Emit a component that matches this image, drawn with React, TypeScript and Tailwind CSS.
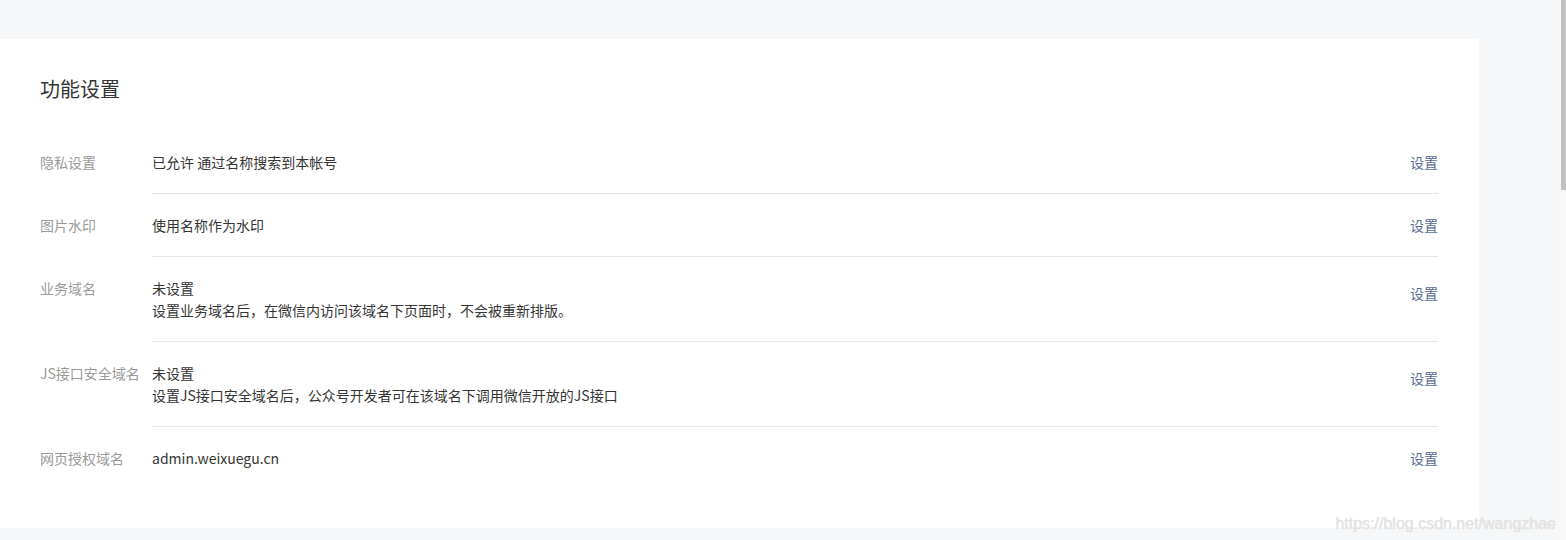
import React from 'react';

type Row = {
  label: string;
  lines: string[];
};

const rows: Row[] = [
  { label: '隐私设置', lines: ['已允许 通过名称搜索到本帐号'] },
  { label: '图片水印', lines: ['使用名称作为水印'] },
  { label: '业务域名', lines: ['未设置', '设置业务域名后，在微信内访问该域名下页面时，不会被重新排版。'] },
  { label: 'JS接口安全域名', lines: ['未设置', '设置JS接口安全域名后，公众号开发者可在该域名下调用微信开放的JS接口'] },
  { label: '网页授权域名', lines: ['admin.weixuegu.cn'] },
];

const font = { fontFamily: '"Microsoft YaHei", "Noto Sans CJK SC", "Noto Sans", sans-serif' };

export default function App() {
  return (
    <div className="relative flex h-[540px] w-[1566px] overflow-hidden bg-[#f6f7f9]" style={font}>
      <div className="flex-1 pt-[39px]">
        <div className="w-[1479px] rounded-tr-[2px] bg-white pl-[40px] pr-[41px] pt-[36px] pb-[39px]">
          <h2 className="text-[20px] leading-[28px] font-normal text-[#353535]">功能设置</h2>
          <div className="mt-[28px]">
            {rows.map((row, i) => {
              const last = i === rows.length - 1;
              const multi = row.lines.length > 1;
              return (
                <div key={row.label} className="flex text-[14px] leading-[22px]">
                  <div className="w-[112px] shrink-0 whitespace-nowrap pt-[20px] text-[#9a9a9a]">{row.label}</div>
                  <div className={`flex flex-1 justify-between pt-[20px] pb-[20px] ${last ? '' : 'border-b border-[#e7e7eb]'}`}>
                    <div className="text-[#353535]">
                      {row.lines.map((l) => (
                        <div key={l}>{l}</div>
                      ))}
                    </div>
                    <a className={`text-[#576b95] ${multi ? 'pt-[5px]' : ''}`}>设置</a>
                  </div>
                </div>
              );
            })}
          </div>
        </div>
      </div>
      <div className="w-[5px] shrink-0 bg-[#f8f8f8]">
        <div className="h-[190px] w-full bg-[#c1c1c1]" />
      </div>
      <div
        className="pointer-events-none absolute right-[10px] bottom-[6px] text-[16px] leading-[20px] text-[#e4e4e4]"
        style={{ fontFamily: '"Liberation Sans", Arial, sans-serif', textShadow: '0 0 1px #d8d8d8' }}
      >
        https://blog.csdn.net/wangzhae
      </div>
    </div>
  );
}
